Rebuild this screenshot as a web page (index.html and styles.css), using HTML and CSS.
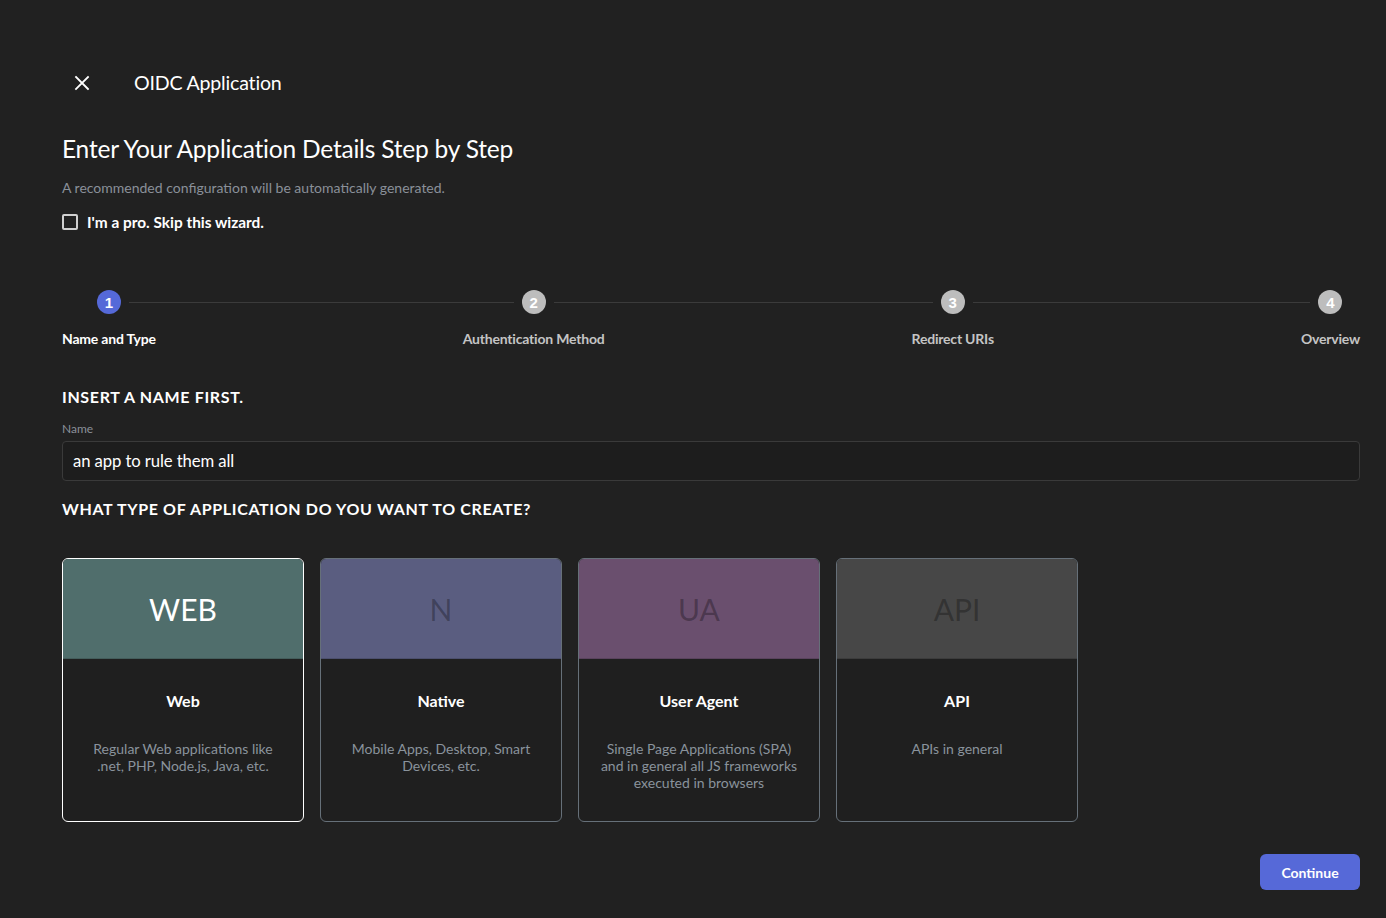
FILE: index.html
```html
<!DOCTYPE html>
<html lang="en">
<head>
<meta charset="utf-8">
<title>OIDC Application</title>
<link rel="stylesheet" href="styles.css">
</head>
<body>
<div class="page">
  <header class="topbar">
    <button class="close" aria-label="Close">
      <svg width="16" height="16" viewBox="0 0 16 16"><path d="M2 2L14 14M14 2L2 14" stroke="#fff" stroke-width="1.8" stroke-linecap="square"/></svg>
    </button>
    <h1 class="app-title">OIDC Application</h1>
  </header>

  <h2 class="heading">Enter Your Application Details Step by Step</h2>
  <p class="sub">A recommended configuration will be automatically generated.</p>
  <label class="check"><span class="box"></span><span>I'm a pro. Skip this wizard.</span></label>

  <div class="stepper">
    <div class="step active first">
      <div class="step-top"><span class="half"></span><span class="circle">1</span><span class="half"></span></div>
      <div class="step-label">Name and Type</div>
    </div>
    <div class="connector"></div>
    <div class="step">
      <div class="step-top"><span class="half"></span><span class="circle">2</span><span class="half"></span></div>
      <div class="step-label">Authentication Method</div>
    </div>
    <div class="connector"></div>
    <div class="step">
      <div class="step-top"><span class="half"></span><span class="circle">3</span><span class="half"></span></div>
      <div class="step-label">Redirect URIs</div>
    </div>
    <div class="connector"></div>
    <div class="step last">
      <div class="step-top"><span class="half"></span><span class="circle">4</span><span class="half"></span></div>
      <div class="step-label">Overview</div>
    </div>
  </div>

  <h3 class="section">INSERT A NAME FIRST.</h3>
  <div class="field">
    <div class="field-label">Name</div>
    <div class="input">an app to rule them all</div>
  </div>

  <h3 class="section second">WHAT TYPE OF APPLICATION DO YOU WANT TO CREATE?</h3>

  <div class="cards">
    <div class="card selected">
      <div class="card-head web"><span class="light">WEB</span></div>
      <div class="card-body">
        <div class="card-title">Web</div>
        <div class="card-desc">Regular Web applications like .net, PHP, Node.js, Java, etc.</div>
      </div>
    </div>
    <div class="card">
      <div class="card-head native">N</div>
      <div class="card-body">
        <div class="card-title">Native</div>
        <div class="card-desc">Mobile Apps, Desktop, Smart Devices, etc.</div>
      </div>
    </div>
    <div class="card">
      <div class="card-head ua">UA</div>
      <div class="card-body">
        <div class="card-title">User Agent</div>
        <div class="card-desc">Single Page Applications (SPA) and in general all JS frameworks executed in browsers</div>
      </div>
    </div>
    <div class="card">
      <div class="card-head api">API</div>
      <div class="card-body">
        <div class="card-title">API</div>
        <div class="card-desc">APIs in general</div>
      </div>
    </div>
  </div>

  <div class="actions">
    <button class="continue">Continue</button>
  </div>
</div>
</body>
</html>
```

FILE: styles.css
```css
* { box-sizing: border-box; }
html, body {
  margin: 0;
  background: #212121;
  color: #fff;
  font-family: Lato, "Open Sans", "Liberation Sans", sans-serif;
}
.page {
  padding: 66px 26px 0 62px;
  min-height: 918px;
}
.topbar {
  display: flex;
  align-items: center;
  height: 34px;
}
.close {
  background: none;
  border: 0;
  padding: 0;
  margin-left: 12px;
  width: 16px;
  height: 16px;
  display: flex;
  cursor: pointer;
}
.app-title {
  margin: -2px 0 0 44px;
  font-size: 19.6px;
  font-weight: 400;
  letter-spacing: -0.2px;
}
.heading {
  margin: 33px 0 0;
  font-size: 24.5px;
  font-weight: 400;
  line-height: 32px;
  letter-spacing: -0.2px;
}
.sub {
  margin: 14px 0 0;
  font-size: 14px;
  line-height: 18px;
  color: #8a9099;
}
.check {
  margin-top: 15px;
  display: flex;
  align-items: center;
  gap: 9px;
  font-size: 15.4px;
  font-weight: 700;
  height: 20px;
}
.box {
  width: 16px;
  height: 16px;
  border: 2px solid #cfcfcf;
  border-radius: 2px;
}
.stepper {
  margin-top: 58px;
  display: flex;
  align-items: flex-start;
}
.step {
  display: flex;
  flex-direction: column;
  align-items: center;
}
.step-top {
  display: flex;
  align-items: center;
  width: 100%;
  height: 24px;
}
.half {
  flex: 1;
  height: 1px;
  background: #3b3b3b;
}
.first .half:first-child, .last .half:last-child { visibility: hidden; }
.circle {
  width: 24px;
  height: 24px;
  border-radius: 50%;
  margin: 0 8px;
  background: #bdbdbd;
  color: #fff;
  font-size: 15px;
  font-weight: 700;
  display: flex;
  align-items: center;
  justify-content: center;
  font-family: "Liberation Sans", Arial, sans-serif;
}
.active .circle { background: #5569d8; }
.connector {
  flex: 1;
  height: 1px;
  margin-top: 11.5px;
  background: #3b3b3b;
}
.step-label {
  margin-top: 16px;
  font-size: 14px;
  font-weight: 700;
  color: #c4c4c4;
  letter-spacing: -0.2px;
  white-space: nowrap;
}
.active .step-label { color: #fff; }
.section {
  margin: 40px 0 0;
  font-size: 16px;
  font-weight: 700;
  letter-spacing: 0.65px;
  line-height: 20px;
}
.section.second { margin-top: 18px; }
.field { margin-top: 15px; }
.field-label {
  font-size: 12px;
  color: #8a9099;
  line-height: 14px;
}
.input {
  margin-top: 5px;
  height: 40px;
  border: 1px solid #3a3a3a;
  border-radius: 4px;
  background: #1d1d1d;
  padding: 0 10px;
  display: flex;
  align-items: center;
  font-size: 16.7px;
  letter-spacing: -0.1px;
}
.cards {
  margin-top: 39px;
  display: flex;
  gap: 16px;
}
.card {
  width: 242px;
  height: 264px;
  border: 1px solid #667079;
  border-radius: 6px;
  overflow: hidden;
  background: #1f1f1f;
}
.card.selected { border-color: #ffffff; }
.card-head {
  height: 100px;
  display: flex;
  align-items: center;
  justify-content: center;
  font-size: 30px;
  color: rgba(0, 0, 0, 0.3);
  border-bottom: 1px solid rgba(0,0,0,0.15);
}
.card-head .light { color: #fff; }
.web { background: #506e6c; }
.native { background: #5a5d80; }
.ua { background: #6a4f6e; }
.api { background: #474747; }
.card-body {
  padding: 32px 20px 0;
  text-align: center;
}
.card-title {
  font-size: 16px;
  font-weight: 700;
  line-height: 20px;
}
.card-desc {
  margin-top: 29px;
  font-size: 14px;
  line-height: 17px;
  color: #8a939c;
}
.actions {
  margin-top: 32px;
  display: flex;
  justify-content: flex-end;
}
.continue {
  width: 100px;
  height: 36px;
  border: 0;
  border-radius: 6px;
  background: #5669d8;
  color: #fff;
  font-family: Lato, "Open Sans", sans-serif;
  font-size: 14px;
  font-weight: 700;
  cursor: pointer;
}
```
